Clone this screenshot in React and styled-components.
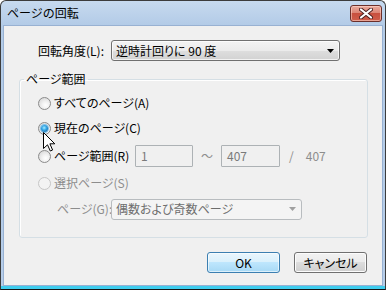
import React from 'react';
import styled, { createGlobalStyle } from 'styled-components';

const GlobalStyle = createGlobalStyle`
  html, body { margin: 0; padding: 0; background: #ffffff; }
  body {
    font-family: "Noto Sans CJK JP", "Noto Sans", sans-serif;
    font-size: 12px;
    color: #000;
  }
  * { box-sizing: border-box; }
`;

const Window = styled.div`
  position: relative;
  width: 386px;
  height: 290px;
  border: 1px solid #3c3c3c;
  border-bottom-color: #151515;
  border-radius: 6px 6px 0 0;
  background: linear-gradient(
    to bottom,
    #c7daef 0,
    #b3cbe7 24px,
    #b6cde9 calc(100% - 3px),
    #3fcdee calc(100% - 3px)
  );
  padding: 0 2px 3px 2px;
  display: flex;
  flex-direction: column;
  overflow: hidden;
`;

const TitleBar = styled.div`
  height: 24px;
  display: flex;
  align-items: flex-start;
  justify-content: space-between;
  padding-left: 4px;
  padding-right: 1px;
`;

const Title = styled.span`
  line-height: 24px;
  font-size: 12px;
  color: #000;
`;

const CloseButton = styled.div`
  margin-top: 4px;
  width: 32px;
  height: 17px;
  border: 1px solid #6b2f2a;
  border-radius: 3px;
  background: linear-gradient(
    to bottom,
    #e9aa9d 0%,
    #dc8575 45%,
    #c8503f 50%,
    #cf5e4b 100%
  );
  box-shadow: inset 0 0 0 1px rgba(255, 220, 210, 0.55);
  display: flex;
  align-items: center;
  justify-content: center;
`;

const Content = styled.div`
  flex: 1;
  background: #f0f0f0;
  border: 1px solid #98b1d2;
  padding: 14px 14px 0 15px;
  display: flex;
  flex-direction: column;
  font-feature-settings: "palt";
`;

const AngleRow = styled.div`
  display: flex;
  align-items: center;
  height: 21px;
  margin-left: 19px;
`;

const FieldLabel = styled.span`
  width: ${p => p.$w}px;
  flex: none;
  line-height: 16px;
  color: ${p => (p.$disabled ? '#8d8d8d' : '#000')};
  white-space: nowrap;
`;

const Select = styled.div`
  width: ${p => p.$w}px;
  height: 21px;
  border: 1px solid ${p => (p.$disabled ? '#b8bcbf' : '#707070')};
  border-radius: 3px;
  background: ${p =>
    p.$disabled
      ? '#f4f4f4'
      : 'linear-gradient(to bottom, #f3f3f3 0%, #ebebeb 50%, #dedede 50%, #d2d2d2 100%)'};
  box-shadow: ${p => (p.$disabled ? 'none' : 'inset 0 0 0 1px rgba(255,255,255,0.7)')};
  display: flex;
  align-items: center;
  justify-content: space-between;
  padding: 0 5px 0 4px;
  color: ${p => (p.$disabled ? '#6d6d6d' : '#000')};
  line-height: 16px;
`;

const GroupBox = styled.fieldset`
  margin: 10px 0 0 0;
  width: 349px;
  border: 1px solid #d5dfe5;
  border-radius: 3px;
  box-shadow: inset 1px 1px 0 #ffffff;
  padding: 4px 0 16px 18px;
  display: flex;
  flex-direction: column;
`;

const Legend = styled.legend`
  margin-left: -14px;
  padding: 0 2px;
  line-height: 16px;
  font-size: 12px;
`;

const Row = styled.div`
  display: flex;
  align-items: center;
  height: 24px;
  margin-top: ${p => p.$mt || 0}px;
  padding-left: ${p => p.$indent || 0}px;
`;

const Radio = styled.span`
  flex: none;
  width: 13px;
  height: 13px;
  border-radius: 50%;
  border: 1px solid ${p => (p.$disabled ? '#c6c6c6' : '#8b8b8b')};
  background: ${p =>
    p.$disabled
      ? '#f3f3f3'
      : 'radial-gradient(circle at 60% 65%, #ffffff 0, #f2f2f2 35%, #d0d0d0 100%)'};
  display: grid;
  place-items: center;
  margin-right: 3px;

  &::after {
    content: '';
    display: ${p => (p.$checked ? 'block' : 'none')};
    width: 7px;
    height: 7px;
    border-radius: 50%;
    background: radial-gradient(circle at 45% 40%, #a6ecff 0, #35a8e8 40%, #0f4f8a 100%);
    box-shadow: 0 0 0 1px #7cc0ea;
  }
`;

const RadioText = styled.span`
  line-height: 16px;
  white-space: nowrap;
  color: ${p => (p.$disabled ? '#8d8d8d' : '#000')};
  width: ${p => (p.$w ? `${p.$w}px` : 'auto')};
  flex: none;
`;

const NumberBox = styled.div`
  width: ${p => p.$w}px;
  height: 22px;
  margin-left: ${p => p.$ml || 0}px;
  border: 1px solid #adb2b5;
  border-radius: 1px;
  background: #f0f0f0;
  color: #7a7a7a;
  line-height: 16px;
  padding: 2px 0 0 5px;
  flex: none;
`;

const Muted = styled.span`
  color: #8d8d8d;
  line-height: 16px;
  margin-left: ${p => p.$ml || 0}px;
  flex: none;
`;

const ButtonRow = styled.div`
  display: flex;
  justify-content: flex-end;
  gap: 14px;
  margin-top: 14px;
  width: 348px;
`;

const Button = styled.div`
  width: 73px;
  height: 21px;
  border: 1px solid ${p => (p.$default ? '#3c7fb1' : '#707070')};
  border-radius: 3px;
  background: ${p =>
    p.$default
      ? 'linear-gradient(to bottom, #eaf6fd 0%, #d9f0fc 50%, #bee6fd 50%, #a7d9f5 100%)'
      : 'linear-gradient(to bottom, #f2f2f2 0%, #ebebeb 50%, #dddddd 50%, #cfcfcf 100%)'};
  box-shadow: inset 0 0 0 1px ${p => (p.$default ? 'rgba(255,255,255,0.6)' : '#fcfcfc')};
  display: flex;
  align-items: center;
  justify-content: center;
  line-height: 16px;
  color: #000;
`;

const Cursor = styled.svg`
  position: absolute;
  left: 42px;
  top: 131px;
  width: 13px;
  height: 20px;
  pointer-events: none;
`;

const Arrow = ({ color }) => (
  <svg width="7" height="4" viewBox="0 0 7 4">
    <path d="M0 0 H7 L3.5 4 Z" fill={color} />
  </svg>
);

export default function App() {
  return (
    <>
      <GlobalStyle />
      <Window>
        <TitleBar>
          <Title>ページの回転</Title>
          <CloseButton>
            <svg width="14" height="11" viewBox="0 0 14 11">
              <path d="M2 1.5 L12 9.5 M12 1.5 L2 9.5" stroke="#4a2020" strokeWidth="4" strokeLinecap="round" />
              <path d="M2 1.5 L12 9.5 M12 1.5 L2 9.5" stroke="#ffffff" strokeWidth="2.2" strokeLinecap="round" />
            </svg>
          </CloseButton>
        </TitleBar>
        <Content>
          <AngleRow>
            <FieldLabel $w={73}>回転角度(L):</FieldLabel>
            <Select $w={229}>
              <span>逆時計回りに 90 度</span>
              <Arrow color="#000" />
            </Select>
          </AngleRow>

          <GroupBox>
            <Legend>ページ範囲</Legend>
            <Row>
              <Radio />
              <RadioText>すべてのページ(A)</RadioText>
            </Row>
            <Row $mt={1}>
              <Radio $checked />
              <RadioText>現在のページ(C)</RadioText>
            </Row>
            <Row $mt={4}>
              <Radio />
              <RadioText $w={81}>ページ範囲(R)</RadioText>
              <NumberBox $w={58}>1</NumberBox>
              <Muted $ml={8}>～</Muted>
              <NumberBox $w={59} $ml={8}>407</NumberBox>
              <Muted $ml={9}>/</Muted>
              <Muted $ml={12}>407</Muted>
            </Row>
            <Row $mt={3}>
              <Radio $disabled />
              <RadioText $disabled>選択ページ(S)</RadioText>
            </Row>
            <Row $mt={2} $indent={19}>
              <FieldLabel $w={54} $disabled>ページ(G):</FieldLabel>
              <Select $w={191} $disabled>
                <span>偶数および奇数ページ</span>
                <Arrow color="#a0a0a0" />
              </Select>
            </Row>
          </GroupBox>

          <ButtonRow>
            <Button $default>OK</Button>
            <Button>キャンセル</Button>
          </ButtonRow>
        </Content>
        <Cursor viewBox="0 0 13 20">
          <path
            d="M0.5 0.5 L0.5 16.5 L4.5 12.8 L7.3 19 L9.6 18 L6.9 11.8 L11.8 11.8 Z"
            fill="#ffffff"
            stroke="#000000"
            strokeWidth="1"
            strokeLinejoin="miter"
          />
        </Cursor>
      </Window>
    </>
  );
}
